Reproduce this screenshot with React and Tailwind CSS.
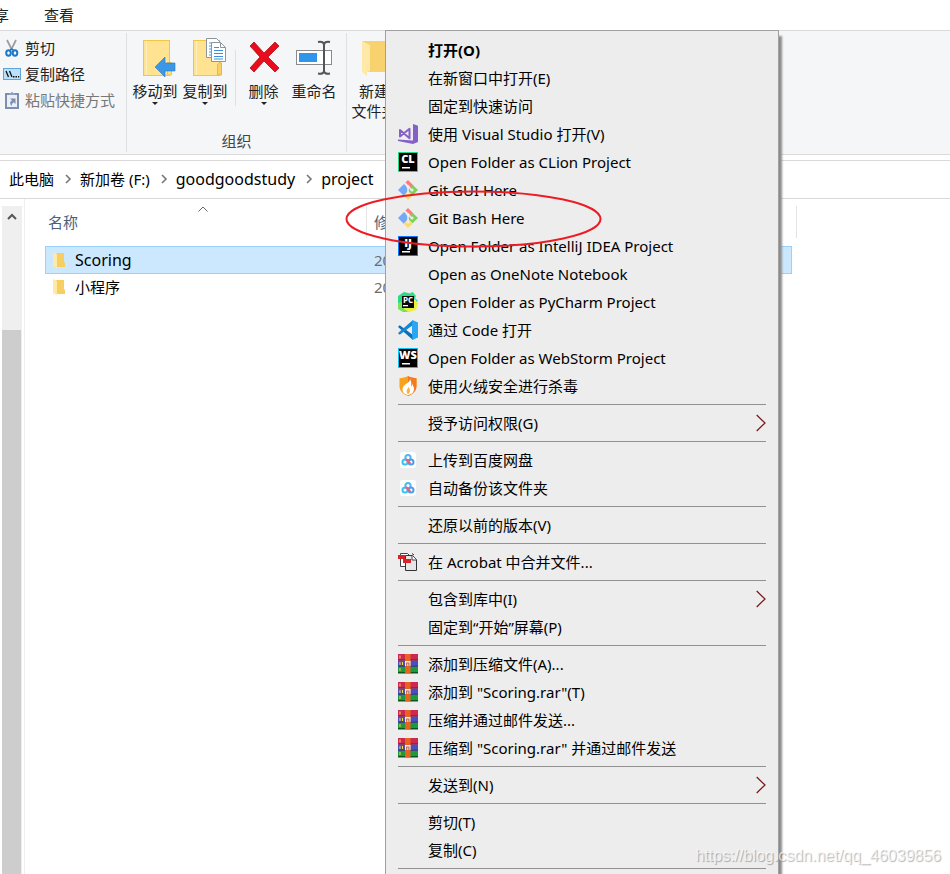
import React, { useState } from 'react';

const VisualStudioIcon = () => (
  <svg viewBox="0 0 20 20" className="w-5 h-5">
    <path d="M15 0l5 1.800V18l-5 2z" fill="#8661c5" />
    <path d="M0 15.500l15 1V20L0 17z" fill="#8661c5" />
    <path d="M2 6v6.500l9.500-7.700v9.400z" fill="none" stroke="#8661c5" strokeWidth="2" strokeLinejoin="round" />
  </svg>
);

const JetBrainsIcon = ({ label, frame }) => (
  <svg viewBox="0 0 20 20" className="w-5 h-5">
    <rect width="20" height="20" fill={frame} />
    <rect x="1" y="1" width="18" height="18" fill="#000" />
    <text x="10" y="11" textAnchor="middle" fontFamily="Open Sans, sans-serif" fontSize="11" fontWeight="800" fill="#fff">{label}</text>
    <rect x="4" y="15" width="8" height="1.500" fill="#fff" />
  </svg>
);

const PyCharmIcon = () => (
  <svg viewBox="0 0 20 20" className="w-5 h-5">
    <path d="M0 4l6-4 8 2 3 7-4 10-7 1-6-4z" fill="#2bd98a" />
    <path d="M12 1l3-1 3 4-2 4z" fill="#3ddc84" />
    <path d="M16 5l4 4-3 2z" fill="#21c8e8" />
    <path d="M5 17l12-10 3 4-2 7-7 2z" fill="#e8f23c" />
    <path d="M0 11l4-1v6l5 3-4 1-5-3z" fill="#7be05a" />
    <rect x="4" y="4" width="12" height="12" fill="#0a0a0a" />
    <text x="10" y="11" textAnchor="middle" fontFamily="Open Sans, sans-serif" fontSize="8" fontWeight="700" fill="#fff">PC</text>
    <rect x="5" y="13" width="5" height="1.300" fill="#fff" />
  </svg>
);

const GitIcon = () => (
  <svg viewBox="0 0 20 20" className="w-5 h-5">
    <path d="M7 3l3-3 5.500 5.500-3 3z" fill="#f97b7b" />
    <path d="M6 4l6 6-6 6-6-6z" fill="#74a9fa" />
    <path d="M14.500 4.700L20 10l-5.500 5.300L9 10z" fill="#7fcf5c" />
    <path d="M10 11l5 4.500-5 4.500-4.500-4.500z" fill="#fbdc6a" />
    <path d="M7 3l6 6.500M10 6.500v8" stroke="#ededed" strokeWidth="1.600" fill="none" />
    <circle cx="10" cy="6.500" r="1.600" fill="#ededed" />
    <circle cx="10" cy="14" r="1.600" fill="#ededed" />
    <circle cx="14" cy="10" r="1.600" fill="#ededed" />
  </svg>
);

const VSCodeIcon = () => (
  <svg viewBox="0 0 20 20" className="w-5 h-5">
    <path d="M0 6.800l1.700-1.500L15 15v5L1.200 7.900z" fill="#0a6fb8" />
    <path d="M0 13.200l1.700 1.500L15 5V0L1.200 12.100z" fill="#1487d4" />
    <path d="M14.500 0L20 2.500v15L14.500 20l-.5-5V5z" fill="#2aa6f2" />
  </svg>
);

const HuorongIcon = () => (
  <svg viewBox="0 0 20 20" className="w-5 h-5">
    <path d="M10 0c2.500 1.500 5.500 2 8.500 2.300V10c0 5-4 8.300-8.500 10C5.500 18.300 1.500 15 1.500 10V2.300C4.500 2 7.500 1.500 10 0z" fill="#f9a21b" />
    <path d="M10 0c2.500 1.500 5.500 2 8.500 2.300V10c0 5-4 8.300-8.500 10z" fill="#f47c20" />
    <path d="M12 3c.5 4-7.500 5-7.500 10.500 0 3 2.500 5 5.500 5.500 3.500-.5 6-2.500 6-6 0-2-1-3-1.500-5-.5 1-.5 2-1.500 2.500.5-2.500.5-5-1-7.500z" fill="#fff" />
    <path d="M10.500 10.500c0 2-1.800 2.500-1.800 4.500 0 1.500.6 2.500 1.300 3.200 1-.7 2-1.700 2-3.700 0-1.500-1-2.300-1.500-4z" fill="#fbb040" />
  </svg>
);

const BaiduIcon = () => (
  <svg viewBox="0 0 20 20" className="w-5 h-5">
    <rect x="2" y="2" width="16" height="16" rx="3" fill="#fff" />
    <circle cx="10" cy="7.700" r="2.600" fill="none" stroke="#4fb8f5" strokeWidth="2" />
    <circle cx="7" cy="12" r="2.500" fill="none" stroke="#35c3f3" strokeWidth="2" />
    <circle cx="13" cy="12" r="2.500" fill="none" stroke="#4a9df0" strokeWidth="2" />
    <path d="M8 9l2 2 2.500 2.700" stroke="#f0607a" strokeWidth="2" fill="none" />
  </svg>
);

const AcrobatIcon = () => (
  <svg viewBox="0 0 20 20" className="w-5 h-5">
    <path d="M2.500 1.500h7l2 2v11h-9z" fill="#fff" stroke="#444" />
    <path d="M7.500 3.500h7l4 4v11h-11z" fill="#e6e6e6" stroke="#333" />
    <path d="M14 1.500l2 1.500" stroke="#333" />
    <path d="M14 3.500V8h4.500" fill="#fff" stroke="#444" />
    <rect x="0" y="3" width="7" height="4" fill="#d8232a" />
    <rect x="5" y="7" width="8" height="4" fill="#d8232a" />
  </svg>
);

const WinRarIcon = () => (
  <svg viewBox="0 0 20 20" className="w-5 h-5">
    <rect y="0" width="20" height="6.500" fill="#cf2850" />
    <rect y="6.500" width="20" height="6" fill="#4a4fc0" />
    <rect y="12.500" width="20" height="6.500" fill="#1d9a3c" />
    <path d="M0 5.500h20v1H0z" fill="#7d1233" />
    <path d="M0 11.700h20v1H0z" fill="#252a78" />
    <path d="M0 18h20v1.500H0z" fill="#0d5520" />
    <path d="M2 1.500v3M2 8v3M2 14v3M4.500 8v3" stroke="#f4d85c" strokeWidth="1" />
    <rect x="7" y="0" width="5.500" height="19" fill="#e8641e" />
    <rect x="7" y="7" width="5.500" height="5" fill="#f3ece8" />
    <path d="M8.700 12V9h2.200v3" stroke="#c4654a" fill="none" strokeWidth="1.200" />
  </svg>
);

const SmallFolder = () => (
  <svg viewBox="0 0 13 17" className="w-[13px] h-[17px]">
    <path d="M3 1h8v9l1 1v4H3z" fill="#f7ce62" />
    <path d="M0 0l4 2v14.500L0 14z" fill="#ffe9a6" />
  </svg>
);

const MoveToIcon = () => (
  <svg viewBox="-8 0 42 40" className="w-[42px] h-10">
    <rect x="1.500" y="2.500" width="26" height="35" fill="#ffe391" stroke="#f0c548" />
    <path d="M4.500 3v34" stroke="#fff0bd" />
    <path d="M25.500 37V24.500h4V37z" fill="#ffe08a" stroke="#f0c548" />
    <path d="M13 29l10-10v6h10v8H23v6z" fill="#3b98e8" stroke="#2879c2" strokeWidth=".6" />
  </svg>
);

const CopyToIcon = () => (
  <svg viewBox="-8 0 42 40" className="w-[42px] h-10">
    <rect x="1.500" y="2.500" width="26" height="35" fill="#ffe391" stroke="#f0c548" />
    <path d="M4.500 3v34" stroke="#fff0bd" />
    <path d="M25.500 37V27q2-4 4-2v12z" fill="#f8d066" stroke="#e8b93e" />
    <path d="M14.500.5h10l4 4v15h-14z" fill="#fff" stroke="#8c949c" />
    <path d="M17 5h7M17 8h7M17 11h3M17 14h3M17 17h3" stroke="#3b98e8" />
    <path d="M19.500 4.500h9l5 5v14h-14z" fill="#fff" stroke="#8c949c" />
    <path d="M28.500 4.500v5h5" fill="none" stroke="#8c949c" />
    <path d="M22 9.500h5M22 12.500h9M22 15.500h9M22 18.500h9M22 21h9" stroke="#3b8ee0" />
  </svg>
);

const DeleteIcon = () => (
  <svg viewBox="0 0 34 40" className="w-[34px] h-10">
    <path d="M3 8l4-4 10 11L28 4l4 4-11 11 11 11-4 4-11-11L7 34l-4-4 10-11z" fill="#e80c1c" stroke="#a8101c" strokeWidth=".8" />
  </svg>
);

const RenameIcon = () => (
  <svg viewBox="0 0 36 40" className="w-9 h-10">
    <rect x=".5" y="12.500" width="35" height="14" fill="#fff" stroke="#8a8a8a" />
    <rect x="3" y="15" width="18" height="9" fill="#2f95ea" />
    <path d="M22 4q6-1 6 3 0-4 6-3M28 5v30M22 35.500q6 1 6-3 0 4 6 3" fill="none" stroke="#555" strokeWidth="2" />
  </svg>
);

const NewFolderIcon = () => (
  <svg viewBox="-4 0 38 40" className="w-[38px] h-10">
    <path d="M3 3h28v31H8z" fill="#f7d26f" />
    <path d="M3 3l8 4v26l-3 1v4l-5-4z" fill="#ffe9a6" />
  </svg>
);

const ScissorsIcon = () => (
  <svg viewBox="0 0 16 18" className="w-4 h-[18px]">
    <path d="M4 1l5 10M13 1L8 11" stroke="#9a9da3" strokeWidth="1.700" />
    <ellipse cx="5.500" cy="14" rx="2.300" ry="2.700" fill="none" stroke="#1979ca" strokeWidth="2" />
    <ellipse cx="12" cy="14" rx="2.300" ry="2.700" fill="none" stroke="#1979ca" strokeWidth="2" />
    <path d="M6 12l2.700-2L11.500 12" fill="none" stroke="#1979ca" strokeWidth="1.500" />
  </svg>
);

const CopyPathIcon = () => (
  <svg viewBox="0 0 18 12" className="w-[18px] h-3">
    <rect x=".5" y=".5" width="17" height="11" fill="#b9e1fb" stroke="#5fa5d8" />
    <path d="M3 3l2.500 6M6.500 3L9 9" stroke="#111" strokeWidth="1.300" />
    <path d="M10 8h1.500v1.500H10zM12.500 8H14v1.500h-1.500zM15 8h1.200v1.500H15z" fill="#111" />
  </svg>
);

const PasteShortcutIcon = () => (
  <svg viewBox="0 0 16 18" className="w-4 h-[18px]">
    <rect x="3" y="3" width="12" height="14" fill="#e9eef7" stroke="#7d8fb0" strokeWidth="2" />
    <path d="M6 4V2h2q1-2.500 2 0h2v2z" fill="#8f9fbd" />
    <path d="M7 7.500h5.500V13L10.800 11.300Q8.500 12.500 8.500 15q-3-3.500.5-5.700z" fill="#7d8fb0" />
  </svg>
);

const Caret = () => (
  <svg viewBox="0 0 6 3" className="w-[6px] h-[3px] mt-px">
    <path d="M0 0h6L3 3z" fill="#222" />
  </svg>
);

const menuItems = [
  { label: '打开(O)', bold: true },
  { label: '在新窗口中打开(E)' },
  { label: '固定到快速访问' },
  { label: '使用 Visual Studio 打开(V)', icon: <VisualStudioIcon /> },
  { label: 'Open Folder as CLion Project', icon: <JetBrainsIcon label="CL" frame="#21d789" /> },
  { label: 'Git GUI Here', icon: <GitIcon /> },
  { label: 'Git Bash Here', icon: <GitIcon /> },
  { label: 'Open Folder as IntelliJ IDEA Project', icon: <JetBrainsIcon label="IJ" frame="#087cfa" /> },
  { label: 'Open as OneNote Notebook' },
  { label: 'Open Folder as PyCharm Project', icon: <PyCharmIcon /> },
  { label: '通过 Code 打开', icon: <VSCodeIcon /> },
  { label: 'Open Folder as WebStorm Project', icon: <JetBrainsIcon label="WS" frame="#07c3f2" /> },
  { label: '使用火绒安全进行杀毒', icon: <HuorongIcon /> },
  { divider: true },
  { label: '授予访问权限(G)', submenu: true },
  { divider: true },
  { label: '上传到百度网盘', icon: <BaiduIcon /> },
  { label: '自动备份该文件夹', icon: <BaiduIcon /> },
  { divider: true },
  { label: '还原以前的版本(V)' },
  { divider: true },
  { label: '在 Acrobat 中合并文件...', icon: <AcrobatIcon /> },
  { divider: true },
  { label: '包含到库中(I)', submenu: true },
  { label: '固定到“开始”屏幕(P)' },
  { divider: true },
  { label: '添加到压缩文件(A)...', icon: <WinRarIcon /> },
  { label: '添加到 "Scoring.rar"(T)', icon: <WinRarIcon /> },
  { label: '压缩并通过邮件发送...', icon: <WinRarIcon /> },
  { label: '压缩到 "Scoring.rar" 并通过邮件发送', icon: <WinRarIcon /> },
  { divider: true },
  { label: '发送到(N)', submenu: true },
  { divider: true },
  { label: '剪切(T)' },
  { label: '复制(C)' },
  { divider: true },
];

const breadcrumbs = [
  { label: '此电脑' },
  { label: '新加卷 (F:)' },
  { label: 'goodgoodstudy', latin: true },
  { label: 'project', latin: true },
];

const files = [
  { name: 'Scoring', date: '2021/3/20 15:12', latin: true },
  { name: '小程序', date: '2021/3/18 20:40' },
];

const RibbonButton = ({ icon, label, caret, className }) => (
  <button className={`flex flex-col items-center shrink-0 leading-5 whitespace-nowrap ${className}`}>
    {icon}
    <span className="mt-[3px]">{label}</span>
    {caret && <Caret />}
  </button>
);

const Ribbon = () => (
  <div className="flex h-[125px] shrink-0 border-y border-[#d9dadb] bg-[#f4f6f8] text-[#222] overflow-hidden">
    <div className="w-[126px] shrink-0 pt-1 pl-[3px]">
      <button className="flex items-center h-[26px] whitespace-nowrap">
        <span className="w-[22px]"><ScissorsIcon /></span>剪切
      </button>
      <button className="flex items-center h-[26px] whitespace-nowrap">
        <span className="w-[22px]"><CopyPathIcon /></span>复制路径
      </button>
      <button disabled className="flex items-center h-[26px] whitespace-nowrap text-[#777]">
        <span className="w-[22px]"><PasteShortcutIcon /></span>粘贴快捷方式
      </button>
    </div>
    <div className="w-px my-[2px] bg-[#dfe0e2]" />
    <div className="w-[219px] shrink-0 flex flex-col justify-between pt-[7px] pb-[3px]">
      <div className="flex pl-[3px]">
        <RibbonButton icon={<MoveToIcon />} label="移动到" caret className="w-[50px]" />
        <RibbonButton icon={<CopyToIcon />} label="复制到" caret className="w-[50px]" />
        <div className="w-px mx-[5px] mt-3 h-14 bg-[#dfe0e2]" />
        <RibbonButton icon={<DeleteIcon />} label="删除" caret className="w-[45px]" />
        <RibbonButton icon={<RenameIcon />} label="重命名" className="w-14" />
      </div>
      <span className="text-center leading-5 text-[#444]">组织</span>
    </div>
    <div className="w-px my-[2px] bg-[#dfe0e2]" />
    <div className="pt-[7px] pl-[2px]">
      <RibbonButton icon={<NewFolderIcon />} label={<>新建<br />文件夹</>} className="w-[50px]" />
    </div>
  </div>
);

const FileTable = ({ selected, onSelect }) => (
  <table className="table-fixed w-[747px] ml-5 border-separate border-spacing-0 text-left">
    <thead>
      <tr className="text-[#4c607a]">
        <th className="w-[322px] p-0 pt-[7px] pb-2 font-normal">
          <div className="relative h-8 pl-[3px] leading-8 border-r border-[#e5e5e5]">
            名称
            <svg viewBox="0 0 10 6" className="absolute left-[153px] top-0 w-[10px] h-[6px]">
              <path d="M.5 5.500L5 1l4.500 4.500" fill="none" stroke="#666" />
            </svg>
          </div>
        </th>
        <th className="p-0 pt-[7px] pb-2 font-normal">
          <div className="-mr-[5px] h-8 pl-[7px] leading-8 border-r border-[#e5e5e5]">修改日期</div>
        </th>
      </tr>
    </thead>
    <tbody>
      {files.map((file) => {
        const active = file.name === selected;
        return (
          <tr key={file.name} onClick={() => onSelect(file.name)} className={active ? 'bg-[#cce8ff]' : ''}>
            <td className={`p-0 border-l ${active ? 'h-7 border-y border-[#99d1ff]' : 'h-[26px] border-transparent'}`}>
              <div className="flex items-center pl-[7px] text-black">
                <span className="w-[22px]"><SmallFolder /></span>
                <span className={file.latin ? 'text-base leading-5' : ''}>{file.name}</span>
              </div>
            </td>
            <td className={`p-0 pl-[7px] border-r text-[#6d6d6d] ${active ? 'h-7 border-y border-[#99d1ff]' : 'h-[26px] border-transparent'}`}>
              {file.date}
            </td>
          </tr>
        );
      })}
    </tbody>
  </table>
);

const ContextMenu = () => (
  <div
    role="menu"
    className="absolute left-[385px] top-[30px] -bottom-4 w-[394px] border border-[#a0a0a0] bg-[#ededed] pt-[5px] px-3 text-black shadow-[3px_6px_2px_#8c8c8c]"
  >
    {menuItems.map((item, i) =>
      item.divider ? (
        <div key={i} role="separator" className="h-px my-1 bg-[#919191]" />
      ) : (
        <button key={i} role="menuitem" className="flex items-center w-full h-7 text-left whitespace-nowrap">
          <span className="w-[30px] shrink-0">{item.icon}</span>
          <span className={`flex-1 ${item.bold ? 'font-bold' : ''}`}>{item.label}</span>
          {item.submenu && (
            <svg viewBox="0 0 10 18" className="w-[10px] h-[18px]">
              <path d="M.7 1l8.300 8-8.300 8" fill="none" stroke="#7a1c1c" strokeWidth="1.300" />
            </svg>
          )}
        </button>
      )
    )}
  </div>
);

const App = () => {
  const [selected, setSelected] = useState('Scoring');

  return (
    <div className="relative flex flex-col h-screen overflow-hidden bg-white font-['Noto_Sans','Noto_Sans_CJK_SC',sans-serif] text-[15px] leading-5">
      <nav className="flex items-center h-[30px] pb-px shrink-0 text-[#222] whitespace-nowrap">
        <button className="-ml-[21px]">共享</button>
        <button className="ml-[35px]">查看</button>
      </nav>

      <Ribbon />

      <div className="flex items-center h-[39px] shrink-0 mt-[5px] pl-[9px] pb-[2px] border-y border-[#d9d9d9] text-black">
        {breadcrumbs.map((crumb, i) => (
          <React.Fragment key={crumb.label}>
            {i > 0 && (
              <svg viewBox="0 0 26 10" className="w-[26px] h-[10px] shrink-0">
                <path d="M12 1l4 4-4 4" fill="none" stroke="#777" strokeWidth="1.600" />
              </svg>
            )}
            <button className={`whitespace-nowrap ${crumb.latin ? 'text-base leading-5' : ''}`}>{crumb.label}</button>
          </React.Fragment>
        ))}
      </div>

      <main className="flex flex-1 min-h-0">
        <div className="flex flex-col w-5 shrink-0 ml-[2px] mt-[7px] bg-[#efefef]">
          <div className="flex justify-center h-[124px] pt-[7px]">
            <svg viewBox="0 0 10 7" className="w-[10px] h-[7px]">
              <path d="M1 6l4-4 4 4" fill="none" stroke="#555" strokeWidth="2" />
            </svg>
          </div>
          <div className="flex-1 mr-px bg-[#cdcdcd]" />
        </div>
        <div className="flex-1 min-w-0 ml-[2px] border-l border-[#f0f0f0]">
          <FileTable selected={selected} onSelect={setSelected} />
        </div>
      </main>

      <ContextMenu />

      {/* hand-drawn mark around the Git Bash entry */}
      <svg viewBox="0 0 258 58" className="absolute left-[345px] top-[190px] w-[258px] h-[58px] pointer-events-none">
        <ellipse cx="128.500" cy="29" rx="127" ry="27.500" fill="none" stroke="#ed1c24" strokeWidth="2" />
      </svg>

      <span className="absolute right-[9px] bottom-2 font-['Liberation_Sans',sans-serif] text-base leading-5 text-white/70 [text-shadow:1px_1px_1px_rgba(0,0,0,0.3)]">
        https://blog.csdn.net/qq_46039856
      </span>
    </div>
  );
};

export default App;
